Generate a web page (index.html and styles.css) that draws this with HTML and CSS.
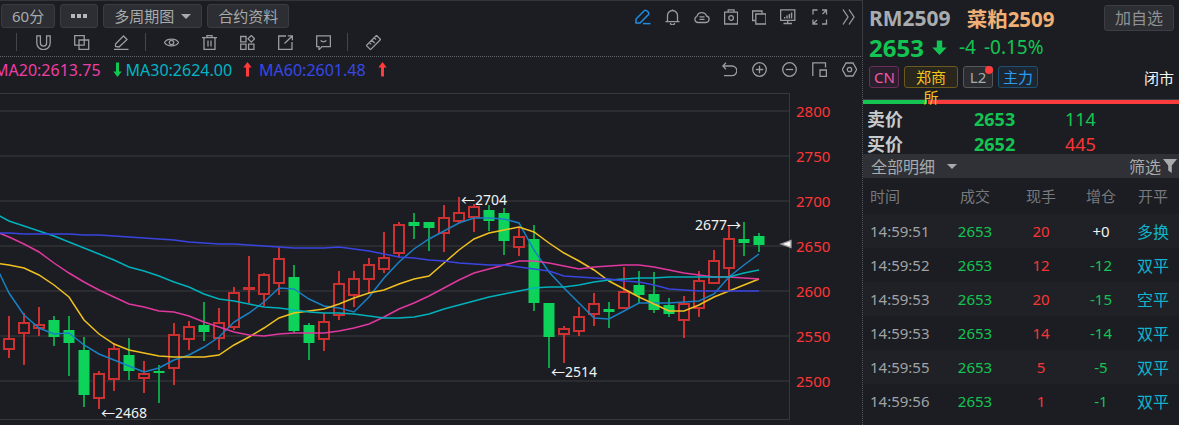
FILE: index.html
```html
<!DOCTYPE html>
<html lang="zh">
<head>
  <meta charset="UTF-8" />
  <title>RM2509 菜粕2509</title>
  <link rel="stylesheet" href="styles.css">
</head>
<body>
  <div class="page">
    <div class="left">
      <div class="tools">
        <div class="bar-top">
          <div class="btn">60分</div>
          <div class="btn btn-dots"><i></i><i></i><i></i></div>
          <div class="btn btn-caret">多周期图<span class="caret"></span></div>
          <div class="btn">合约资料</div>
          <div class="top-icons">
            <svg class="blue" width="16" height="16" viewBox="0 0 16 16"><path d="M1 14V10L9.5 1.5Q10.5.8 11.5 1.5L13.5 3.5Q14 4.5 13.5 5.5L5 14Z"/><path d="M8 14.6H15.5"/></svg>
            <svg width="15" height="16" viewBox="0 0 15 16"><path d="M2.5 12.5V6.5a5 5 0 0 1 10 0V12.5M.5 12.7H14.5M5.5 14a2 2 0 0 0 4 0M7.5 1.5V.5"/></svg>
            <svg width="16" height="16" viewBox="0 0 16 16"><path d="M4 13.5A3.2 3.2 0 0 1 3 7.3 5 5 0 0 1 12.5 7 3.3 3.3 0 0 1 12 13.5ZM5.5 7.8H10.5M5.5 10.3H10.5"/></svg>
            <svg width="14" height="16" viewBox="0 0 14 16"><path d="M.6 3.2H13.6V15H.6ZM4.2 3.2V.8H10V3.2"/><circle cx="7.1" cy="9" r="2.3"/></svg>
            <svg width="14" height="16" viewBox="0 0 14 16"><path d="M3 11.5H.6V2H10V4.5"/><path d="M3.8 5H14V15H3.8Z"/></svg>
            <svg width="18" height="16" viewBox="0 0 18 16"><path d="M.6 .8H14.8V11.4H.6ZM7.7 11.4V14M3.5 14.5H12"/><path class="solid" d="M4 8h1.4v1.6H4ZM6.3 6.5h1.4v3.1H6.3ZM8.6 5h1.4v4.6H8.6ZM10.9 3.5h1.4v6.1h-1.4Z"/></svg>
            <svg width="16" height="16" viewBox="0 0 16 16"><path d="M1 5.5V1H5.5M10 1H14.5V5.5M14.5 10.5V15H10M5.5 15H1V10.5M14 1.5 10.5 5M1.5 14.5 5 11"/></svg>
            <svg width="13" height="16" viewBox="0 0 13 16"><path d="M1 .5 6 8 1 15.5M7 .5 12 8 7 15.5"/></svg>
          </div>
        </div>
        <div class="bar-draw">
          <span class="sep sep-first"></span>
          <svg width="15" height="15" viewBox="0 0 15 15"><path d="M.8 .8V8a6.7 6.7 0 0 0 13.4 0V.8H10.6V8a3.1 3.1 0 0 1-6.2 0V.8Z"/></svg>
          <svg width="17" height="15" viewBox="0 0 17 15"><path d="M.7 .7H10.2V10.2H.7Z"/><path d="M5 5H14.7V14.5H5Z"/></svg>
          <svg width="15" height="15" viewBox="0 0 15 15"><path d="M1.5 11.5V9L9.5 1 13 4.5 5 12ZM0 14.4H14.5"/></svg>
          <span class="sep"></span>
          <svg width="15" height="15" viewBox="0 0 15 15"><path d="M.4 7.5C3 3 12 3 14.6 7.5 12 12 3 12 .4 7.5Z"/><circle cx="7.5" cy="7.5" r="2.2"/></svg>
          <svg width="15" height="15" viewBox="0 0 15 15"><path d="M0 2.6H15M2 2.6V14.5H13V2.6M5 2.6V.6H10V2.6M6 5.5V11.5M9 5.5V11.5"/></svg>
          <svg width="15" height="15" viewBox="0 0 15 15"><path d="M.7 1.5H6V6.8H.7ZM.7 9.2H6V14.5H.7ZM8.6 9.2H13.9V14.5H8.6ZM11.3 .5 14.6 3.8 11.3 7.1 8 3.8Z"/></svg>
          <svg width="15" height="15" viewBox="0 0 15 15"><path d="M8 1H.7V14.4H14V7M6.5 8.5 14 1.2M9.8 .8H14.4V5.2"/></svg>
          <svg width="15" height="15" viewBox="0 0 15 15"><path d="M.7 .8H14.4V11.6H6L3 14.6V11.6H.7ZM4.6 5.6Q7.5 8.2 10.4 5.6"/></svg>
          <span class="sep"></span>
          <svg width="15" height="15" viewBox="0 0 15 15"><path d="M.4 10.5 10.5 .4 14.6 4.5 4.5 14.6ZM3.4 7.6 5.2 9.4M5.8 5.2 8.6 8M8.2 2.8 10 4.6"/></svg>
        </div>
      </div>

      <div class="legend">
        <span class="ma20">MA20:2613.75</span>
        <svg class="arrow arrow-a" width="9" height="15" viewBox="0 0 9 15"><path class="down" d="M4.5 15 .3 9.5H3V.5H6V9.5H8.7Z"/></svg>
        <span class="ma30">MA30:2624.00</span>
        <svg class="arrow arrow-b" width="9" height="15" viewBox="0 0 9 15"><path class="up" d="M4.5 0 .3 5.5H3V14.5H6V5.5H8.7Z"/></svg>
        <span class="ma60">MA60:2601.48</span>
        <svg class="arrow arrow-a" width="9" height="15" viewBox="0 0 9 15"><path class="up" d="M4.5 0 .3 5.5H3V14.5H6V5.5H8.7Z"/></svg>
        <div class="legend-icons">
          <svg width="15" height="15" viewBox="0 0 15 15"><path d="M4 .8 .8 4 4 7.2M.8 4H10a4.8 4.8 0 0 1 0 9.6H2"/></svg>
          <svg width="15" height="15" viewBox="0 0 15 15"><circle cx="7.5" cy="7.5" r="6.8"/><path d="M3.8 7.5H11.2M7.5 3.8V11.2"/></svg>
          <svg width="15" height="15" viewBox="0 0 15 15"><circle cx="7.5" cy="7.5" r="6.8"/><path d="M3.8 7.5H11.2"/></svg>
          <svg width="15" height="15" viewBox="0 0 15 15"><path d="M.8 14V.8H13.5V5.5"/><path d="M8 8H14.4V14.4H8Z"/></svg>
          <svg width="15" height="15" viewBox="0 0 15 15"><path d="M4 1H11L14.7 7.5 11 14H4L.3 7.5Z"/><circle cx="7.5" cy="7.5" r="2.2"/></svg>
        </div>
      </div>

      <svg id="chart" class="chart" viewBox="0 93 861 332" width="861" height="332"></svg>
    </div>

    <div class="side">
      <div class="head-row">
        <span class="code">RM2509</span>
        <span class="name">菜粕2509</span>
        <div class="add-btn">加自选</div>
      </div>
      <div class="price-row">
        <span class="last">2653</span>
        <svg class="last-arrow" width="15" height="15" viewBox="0 0 15 15"><path d="M7.5 15 .3 7.6H4.8V.5H10.2V7.6H14.7Z"/></svg>
        <span class="chg">-4</span>
        <span class="chg">-0.15%</span>
      </div>
      <div class="tag-row">
        <span class="tag tag-cn">CN</span>
        <span class="tag tag-ex">郑商所</span>
        <span class="tag tag-l2">L2<i class="dot"></i></span>
        <span class="tag tag-main">主力</span>
        <span class="status">闭市</span>
      </div>
      <div class="ratio"><div class="ratio-buy"></div><div class="ratio-sell"></div></div>
      <div class="quote">
        <div class="quote-row"><b>卖价</b><b class="q-price">2653</b><span class="q-vol green">114</span></div>
        <div class="quote-row"><b>买价</b><b class="q-price">2652</b><span class="q-vol red">445</span></div>
      </div>
      <div class="detail-bar">
        <span>全部明细</span><span class="caret"></span>
        <span class="filter">筛选</span>
        <svg width="14" height="14" viewBox="0 0 14 14"><path d="M0 0H14L8.8 6.5V14L5.2 11.5V6.5Z"/></svg>
      </div>
      <div class="ticks">
        <div class="tick-head"><span class="t-time">时间</span><span>成交</span><span>现手</span><span>增仓</span><span>开平</span></div>
        <div class="tick"><span class="t-time">14:59:51</span><span class="green">2653</span><span class="red">20</span><span class="white">+0</span><span class="t-type">多换</span></div>
        <div class="tick"><span class="t-time">14:59:52</span><span class="green">2653</span><span class="red">12</span><span class="green">-12</span><span class="t-type">双平</span></div>
        <div class="tick"><span class="t-time">14:59:53</span><span class="green">2653</span><span class="red">20</span><span class="green">-15</span><span class="t-type">空平</span></div>
        <div class="tick"><span class="t-time">14:59:53</span><span class="green">2653</span><span class="red">14</span><span class="green">-14</span><span class="t-type">双平</span></div>
        <div class="tick"><span class="t-time">14:59:55</span><span class="green">2653</span><span class="red">5</span><span class="green">-5</span><span class="t-type">双平</span></div>
        <div class="tick"><span class="t-time">14:59:56</span><span class="green">2653</span><span class="red">1</span><span class="green">-1</span><span class="t-type">双平</span></div>
      </div>
    </div>
  </div>
  <script src="chart.js"></script>
</body>
</html>
```

FILE: styles.css
```css
* {
  box-sizing: border-box;
}
body {
  margin: 0;
  background-color: #1b1d22;
  color: #a8aaac;
  font-family: "Noto Sans", "Noto Sans CJK SC", sans-serif;
  overflow: hidden;
}
.page {
  display: flex;
  width: 1179px;
  height: 425px;
  overflow: hidden;
}
.left {
  width: 863px;
  flex: none;
  border-right: 1px dotted #55575b;
}
.tools {
  height: 57px;
  margin-right: -1px;
  border-top: 1px solid #33353a;
  border-right: 1px solid #3a3c41;
  border-bottom: 1px dotted #60626a;
}
svg path, svg circle {
  fill: none;
  stroke: #9a9c9f;
  stroke-width: 1.3;
}

/* top bars */
.bar-top {
  display: flex;
  align-items: center;
  height: 27px;
  padding: 3px 7px 0 1px;
  gap: 5px;
}
.btn {
  display: flex;
  align-items: center;
  justify-content: center;
  height: 24px;
  padding: 0 10px;
  background-color: #2c2e33;
  border: 1px solid #3a3c41;
  border-radius: 3px;
  font-size: 15px;
  line-height: 1;
}
.btn-dots {
  width: 38px;
  gap: 2px;
}
.btn-dots i {
  width: 4px;
  height: 4px;
  background-color: #b5b6b8;
}
.btn-caret {
  gap: 7px;
}
.caret {
  width: 0;
  height: 0;
  border-left: 5px solid transparent;
  border-right: 5px solid transparent;
  border-top: 5px solid #a8aaac;
}
.top-icons {
  display: flex;
  margin-left: auto;
  gap: 14px;
  padding-top: 2px;
}
.top-icons .blue path {
  stroke: #1e8fe6;
  stroke-width: 1.5;
}
.top-icons path.solid {
  fill: #9a9c9f;
  stroke: none;
}
.bar-draw {
  display: flex;
  align-items: center;
  height: 28px;
  padding-left: 16px;
  gap: 23px;
}
.sep {
  width: 1px;
  height: 18px;
  margin: 0 -5px 0 -7px;
  background-color: #44464b;
}
.sep-first {
  margin: 0 -4px 0 0;
}

/* legend line */
.legend {
  display: flex;
  align-items: center;
  height: 36px;
  margin-left: -6px;
  padding-right: 5px;
  padding-bottom: 11px;
  font-size: 16px;
  white-space: nowrap;
}
.ma20 { color: #ee3fa6; }
.ma30 { color: #00b5c4; }
.ma60 { color: #3748e6; }
.arrow { flex: none; }
.arrow-a { margin: 0 4px 0 12px; }
.arrow-b { margin: 0 7px 0 11px; }
.arrow path { stroke: none; }
.arrow path.up { fill: #ff3b3b; }
.arrow path.down { fill: #12c653; }
.legend-icons {
  display: flex;
  gap: 15px;
  margin-left: auto;
}

/* chart */
.chart {
  display: block;
}
.chart .grid { stroke: #2a2c30; stroke-width: 2; }
.chart .frame { stroke: #36383c; stroke-width: 1; fill: none; }
.chart .wick-up { stroke: #cc3030; stroke-width: 2; }
.chart .wick-down { stroke: #0f9f48; stroke-width: 2; }
.chart .body-up { stroke: #cc3030; stroke-width: 2; fill: #1b1d22; }
.chart .body-down { fill: #0ed35a; }
.chart .ma { fill: none; stroke-width: 1.5; }
.chart .axis { fill: #ff3535; font-size: 15px; }
.chart .note { fill: #f2f2f2; font-size: 14px; }
.chart .mark { fill: #f5f5f5; }

/* right panel */
.side {
  flex: 1;
  min-width: 0;
}
.head-row {
  display: flex;
  align-items: center;
  height: 32px;
  padding: 3px 5px 0 6px;
  font-weight: 700;
}
.code {
  color: #a9abae;
  font-size: 21px;
}
.name {
  margin-left: 16px;
  color: #efb077;
  font-size: 20.5px;
}
.add-btn {
  width: 70px;
  height: 26px;
  margin-left: auto;
  background-color: #2c2e33;
  border: 1px solid #3c3e44;
  border-radius: 3px;
  color: #8f9194;
  font-size: 16px;
  font-weight: 400;
  line-height: 24px;
  text-align: center;
}
.price-row {
  display: flex;
  align-items: center;
  height: 30px;
  padding-left: 6px;
  color: #14c452;
}
.last {
  font-size: 24px;
  font-weight: 700;
}
.last-arrow {
  margin: 0 12px 0 8px;
}
.last-arrow path {
  fill: #14c452;
  stroke: none;
}
.chg {
  margin-right: 8px;
  font-size: 19px;
}
.tag-row {
  display: flex;
  align-items: center;
  height: 26px;
  padding: 0 5px 0 6px;
  gap: 5px;
  margin-top: 2px;
}
.tag {
  position: relative;
  display: block;
  height: 22px;
  padding: 0 4px;
  border: 1px solid;
  border-radius: 3px;
  font-size: 15px;
  line-height: 20px;
  text-align: center;
}
.tag-cn { width: 30px; color: #f15aa9; border-color: #6b2e58; background-color: #2a1f2c; }
.tag-ex { width: 54px; color: #f3c41c; border-color: #6b5a1c; background-color: #28261d; }
.tag-l2 { width: 30px; color: #a8aaac; border-color: #55575b; background-color: #2a2c30; }
.tag-main { width: 40px; color: #2f9bf0; border-color: #1f4f73; background-color: #1c2731; }
.dot {
  position: absolute;
  top: -1px;
  right: -1px;
  width: 8px;
  height: 8px;
  background-color: #ff3b3b;
  border-radius: 50%;
}
.status {
  margin-left: auto;
  color: #f2f2f2;
  font-size: 15px;
}
.ratio {
  display: flex;
  height: 5px;
  margin-top: 9px;
  border-top: 1px solid #3a3c41;
}
.ratio-buy {
  width: 64px;
  background-color: #14c452;
}
.ratio-sell {
  flex: 1;
  margin-left: 1px;
  background-color: #fa3c3c;
}
.quote {
  height: 50px;
  padding: 3px 0 0 4px;
}
.quote-row {
  display: flex;
  align-items: center;
  height: 24.5px;
  font-size: 18px;
}
.quote-row b {
  width: 107px;
  color: #c9cacc;
  line-height: 1;
}
.quote-row .q-price {
  width: 91px;
  color: #14c452;
}
.green { color: #14c452; }
.red { color: #fa3535; }
.white { color: #f2f2f2; }
.detail-bar {
  display: flex;
  align-items: center;
  height: 24px;
  padding: 0 2px 0 8px;
  background-color: #2f3136;
  font-size: 16px;
}
.detail-bar .caret {
  margin-left: 12px;
}
.filter {
  margin-left: auto;
  margin-right: 2px;
}
.detail-bar svg path {
  fill: #a8aaac;
  stroke: none;
}
.tick-head, .tick {
  display: grid;
  grid-template-columns: 79px 66px 66px 54px 50px;
  align-items: center;
  text-align: center;
  font-size: 15px;
}
.tick-head {
  height: 36px;
  padding-bottom: 2px;
  color: #77797d;
}
.tick {
  height: 34px;
}
.tick:nth-child(even) {
  background-color: #1f2126;
}
.t-time {
  padding-left: 7px;
  text-align: left;
}
.tick .t-time {
  color: #a0a2a5;
}
.t-type {
  color: #10b4cc;
  font-size: 16px;
}
```

FILE: chart.js
```js
const NS = 'http://www.w3.org/2000/svg';
const chart = document.getElementById('chart');

// wick top, wick bottom, body top, body bottom, 1 = up (red) 0 = down (green)
const candles = [
  [316, 358, 339, 349, 1], [313, 365, 323, 333, 1], [307, 336, 325, 328, 1], [316, 346, 320, 337, 0],
  [316, 376, 330, 343, 0], [337, 407, 350, 395, 0], [371, 409, 374, 398, 1], [343, 391, 349, 379, 1],
  [338, 380, 355, 371, 0], [361, 393, 374, 378, 1], [365, 403, 371, 373, 0], [323, 385, 335, 368, 1],
  [321, 350, 327, 339, 1], [302, 341, 325, 332, 0], [308, 350, 323, 338, 1], [287, 330, 293, 327, 1],
  [256, 303, 288, 289, 1], [273, 306, 275, 294, 1], [247, 295, 259, 283, 1], [265, 333, 277, 331, 0],
  [323, 360, 325, 343, 0], [313, 351, 322, 339, 1], [271, 320, 284, 315, 1], [271, 307, 279, 295, 1],
  [258, 293, 265, 279, 1], [232, 273, 258, 269, 1], [222, 258, 225, 253, 1], [213, 239, 222, 226, 0],
  [222, 251, 222, 228, 0], [205, 252, 218, 233, 1], [197, 223, 213, 221, 1], [204, 232, 207, 217, 1],
  [205, 231, 210, 221, 0], [208, 255, 213, 241, 0], [228, 256, 237, 247, 1], [225, 311, 239, 303, 0],
  [303, 368, 303, 337, 0], [326, 363, 329, 334, 1], [307, 336, 317, 331, 1], [293, 326, 304, 314, 1],
  [302, 328, 309, 312, 0], [267, 309, 292, 308, 1], [271, 303, 285, 295, 0], [272, 313, 294, 310, 0],
  [298, 317, 305, 314, 0], [296, 338, 304, 320, 1], [271, 317, 281, 308, 1], [250, 283, 261, 283, 1],
  [226, 290, 239, 268, 1], [222, 256, 239, 243, 0], [233, 252, 236, 245, 0]
];

// y for every candle, first value is just left of the window
const lines = {
  '#1a80c4': [262, 293, 315, 328, 334, 333, 345, 354, 360, 366, 372, 368, 360, 355, 347, 337, 322, 313, 302, 288, 289, 299, 306, 308, 312, 297, 278, 262, 249, 239, 231, 223, 218, 218, 219, 223, 250, 272, 288, 303, 318, 319, 311, 303, 303, 303, 302, 301, 294, 277, 265, 254],
  '#f0c020': [263, 265, 268, 275, 285, 297, 320, 334, 344, 350, 353, 356, 357, 357, 357, 355, 345, 337, 328, 318, 313, 311, 309, 304, 298, 293, 290, 284, 279, 276, 263, 250, 239, 233, 230, 227, 232, 243, 253, 261, 270, 281, 289, 297, 304, 311, 311, 305, 297, 291, 285, 279],
  '#e0389f': [231, 237, 244, 252, 263, 273, 282, 290, 297, 304, 307, 311, 312, 316, 322, 327, 332, 335, 336, 334, 333, 333, 333, 331, 328, 324, 317, 309, 303, 296, 288, 280, 273, 269, 265, 261, 261, 263, 266, 269, 267, 266, 265, 265, 267, 270, 273, 275, 277, 277, 278, 279],
  '#00b0bc': [213, 221, 226, 231, 236, 242, 248, 254, 260, 267, 271, 276, 282, 287, 294, 299, 301, 304, 307, 308, 310, 312, 313, 313, 314, 316, 318, 318, 317, 314, 309, 305, 301, 297, 294, 291, 288, 287, 287, 285, 282, 280, 279, 278, 278, 277, 277, 277, 277, 277, 273, 270],
  '#3a44e0': [233, 233, 234, 234, 234, 234, 235, 235, 236, 237, 238, 239, 240, 242, 243, 244, 244, 245, 246, 247, 248, 248, 248, 247, 249, 251, 254, 257, 258, 260, 261, 263, 264, 265, 265, 267, 269, 271, 276, 277, 278, 279, 281, 282, 285, 289, 290, 291, 291, 291, 291, 291]
};

const axis = [[111, 2800], [156, 2750], [201, 2700], [246, 2650], [291, 2600], [336, 2550], [381, 2500]];

const notes = [
  [101, 418, '←2468'],
  [461, 205, '←2704'],
  [551, 377, '←2514'],
  [695, 230, '2677→']
];

function add(tag, attrs, text) {
  const el = document.createElementNS(NS, tag);
  for (const k in attrs) el.setAttribute(k, attrs[k]);
  if (text !== undefined) el.textContent = text;
  chart.appendChild(el);
  return el;
}

axis.forEach(([y, label]) => {
  add('line', { class: 'grid', x1: 0, x2: 789, y1: y, y2: y });
  add('text', { class: 'axis', x: 796, y: y + 6 }, label);
});
add('path', { class: 'frame', d: 'M0 93.5H789.5V419.5H0' });

candles.forEach((c, i) => {
  const x = 9 + i * 15;
  const up = c[4] === 1;
  add('line', { class: up ? 'wick-up' : 'wick-down', x1: x, x2: x, y1: c[0], y2: c[1] });
  if (up) {
    add('rect', { class: 'body-up', x: x - 5, y: c[2], width: 10, height: c[3] - c[2] });
  } else {
    add('rect', { class: 'body-down', x: x - 5.5, y: c[2], width: 11, height: c[3] - c[2] });
  }
});

for (const color in lines) {
  const pts = lines[color].map((y, i) => (i * 15 - 6) + ',' + y).join(' ');
  add('polyline', { class: 'ma', stroke: color, points: pts });
}

notes.forEach(([x, y, label]) => add('text', { class: 'note', x: x, y: y }, label));
add('path', { class: 'mark', d: 'M781 244 791 240.5V247.5Z' });
```
